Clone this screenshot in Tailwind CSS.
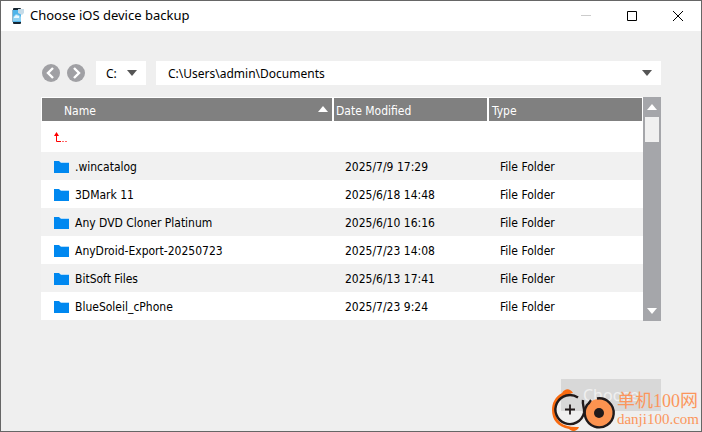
<!DOCTYPE html>
<html lang="en">
<head>
  <meta charset="UTF-8">
  <meta name="viewport" content="width=device-width, initial-scale=1.0">
  <title>Choose iOS device backup</title>
  <script src="https://cdn.jsdelivr.net/npm/@tailwindcss/browser@4"></script>
</head>
<body class="bg-[#efefef] font-['DejaVu_Sans_Condensed','DejaVu_Sans','Noto_Sans_CJK_SC',sans-serif] font-stretch-condensed text-black">
  <div class="relative flex min-h-screen flex-col border border-[#666]">
    <!-- Title bar -->
    <header class="flex h-[30px] items-center bg-white pl-2">
      <svg class="size-4" viewBox="0 0 16 16" aria-hidden="true">
        <rect x="4" y="0" width="8" height="16" rx="1" fill="#172632"/>
        <rect x="4" y="2" width="8" height="12" fill="#4fb4ea"/>
        <path d="M4 9l3-3 3 1 2 2v4H4z" fill="#8fd2f3"/>
        <path d="M5 9l2-2 3 1v2H5z" fill="#e8f7ff"/>
        <path d="M9 1h6v4l-2 2-4-2z" fill="#c6dce9"/>
        <path d="M3 2h1v12H3z" fill="#91b5cb"/>
      </svg>
      <h1 class="ml-[5px] pb-[2px] font-['Noto_Sans',sans-serif] text-[13px] leading-4">Choose iOS device backup</h1>
      <div class="ml-auto flex h-full">
        <button class="flex w-[46px] items-center justify-center" aria-label="Minimize" disabled>
          <svg class="size-[10px]" viewBox="0 0 10 10"><path d="M0 4.500h10" stroke="#ccc"/></svg>
        </button>
        <button class="flex w-[46px] items-center justify-center" aria-label="Maximize">
          <svg class="size-[10px]" viewBox="0 0 10 10"><path d="M.5.5h9v9h-9z" fill="none" stroke="#000"/></svg>
        </button>
        <button class="flex w-[46px] items-center justify-center" aria-label="Close">
          <svg class="size-[10px]" viewBox="0 0 10 10"><path d="M0 0l10 10M10 0L0 10" stroke="#000"/></svg>
        </button>
      </div>
    </header>

    <main class="flex grow flex-col px-10 pt-[30px] pb-5 text-xs">
      <!-- Navigation -->
      <div class="flex h-6 items-center">
        <button class="ml-px" aria-label="Back">
          <svg class="size-[18px]" viewBox="0 0 18 18"><circle cx="9" cy="9" r="9" fill="#a0a0a4"/><path d="M11 4L6 9l5 5" fill="none" stroke="#fff" stroke-width="2.400"/></svg>
        </button>
        <button class="ml-[7px]" aria-label="Forward">
          <svg class="size-[18px]" viewBox="0 0 18 18"><circle cx="9" cy="9" r="9" fill="#a0a0a4"/><path d="M7 4l5 5-5 5" fill="none" stroke="#fff" stroke-width="2.400"/></svg>
        </button>
        <div class="relative ml-[11px] h-6 w-[50px] bg-white">
          <select class="h-full w-full appearance-none pt-px pl-[10px] font-['Noto_Sans',sans-serif]" aria-label="Drive">
            <option>C:</option>
          </select>
          <svg class="pointer-events-none absolute top-[9px] right-[9px] h-[6px] w-[10px]" viewBox="0 0 10 6"><path d="M0 0h10L5 6z" fill="#555"/></svg>
        </div>
        <div class="relative ml-[10px] h-6 grow bg-white">
          <select class="h-full w-full appearance-none pt-px pl-3 font-['Noto_Sans',sans-serif]" aria-label="Folder">
            <option>C:\Users\admin\Documents</option>
          </select>
          <svg class="pointer-events-none absolute top-[9px] right-[9px] h-[6px] w-[10px]" viewBox="0 0 10 6"><path d="M0 0h10L5 6z" fill="#555"/></svg>
        </div>
      </div>

      <svg class="hidden">
        <symbol id="folder" viewBox="0 0 15 12">
          <path d="M5 1h10v2H5z" fill="#b5dcfa"/>
          <path d="M0 0h5l2 2h8v10H0z" fill="#0088f0"/>
        </symbol>
      </svg>

      <!-- File list -->
      <div class="mt-3 flex h-56">
        <div class="grow self-start bg-white">
          <table class="w-full table-fixed border-separate border-spacing-0 text-left">
            <colgroup>
              <col class="w-[291px]">
              <col class="w-[155px]">
              <col>
            </colgroup>
            <thead>
              <tr class="h-6 text-white">
                <th class="border-t border-l border-white bg-[#808080] p-0 pt-[2px] font-normal">
                  <div class="flex items-center justify-between pr-1 pl-[22px]">
                    Name
                    <svg class="mb-1 h-[6px] w-[10px]" viewBox="0 0 10 6"><path d="M5 0l5 6H0z" fill="#fff"/></svg>
                  </div>
                </th>
                <th class="border-t border-l-2 border-white bg-[#808080] p-0 pt-[2px] pl-[2px] font-normal">Date Modified</th>
                <th class="border-t border-r border-l-2 border-white bg-[#808080] p-0 pt-[2px] pl-[3px] font-normal">Type</th>
              </tr>
            </thead>
            <tbody>
              <tr class="h-[31px]">
                <td class="p-0 pt-[2px] pl-[13px]" colspan="3">
                  <button class="block" aria-label="Up one level">
                    <svg class="h-[11px] w-[14px]" viewBox="0 0 14 11"><path d="M2.500 0L5 4H0z" fill="red"/><path d="M2.500 3v6.500H7" fill="none" stroke="red"/><path d="M8 9.500h6" stroke="#f66" stroke-dasharray="2 1"/></svg>
                  </button>
                </td>
              </tr>
              <tr class="h-7 odd:bg-white even:bg-[#f1f1f1]">
                <td class="p-0 pt-[2px] pl-[13px]"><div class="flex items-center gap-[6px]"><svg class="h-3 w-[15px]"><use href="#folder"/></svg>.wincatalog</div></td>
                <td class="p-0 pt-[2px] pl-[13px]">2025/7/9 17:29</td>
                <td class="p-0 pt-[2px] pl-[13px]">File Folder</td>
              </tr>
              <tr class="h-7 odd:bg-white even:bg-[#f1f1f1]">
                <td class="p-0 pt-[2px] pl-[13px]"><div class="flex items-center gap-[6px]"><svg class="h-3 w-[15px]"><use href="#folder"/></svg>3DMark 11</div></td>
                <td class="p-0 pt-[2px] pl-[13px]">2025/6/18 14:48</td>
                <td class="p-0 pt-[2px] pl-[13px]">File Folder</td>
              </tr>
              <tr class="h-7 odd:bg-white even:bg-[#f1f1f1]">
                <td class="p-0 pt-[2px] pl-[13px]"><div class="flex items-center gap-[6px]"><svg class="h-3 w-[15px]"><use href="#folder"/></svg>Any DVD Cloner Platinum</div></td>
                <td class="p-0 pt-[2px] pl-[13px]">2025/6/10 16:16</td>
                <td class="p-0 pt-[2px] pl-[13px]">File Folder</td>
              </tr>
              <tr class="h-7 odd:bg-white even:bg-[#f1f1f1]">
                <td class="p-0 pt-[2px] pl-[13px]"><div class="flex items-center gap-[6px]"><svg class="h-3 w-[15px]"><use href="#folder"/></svg>AnyDroid-Export-20250723</div></td>
                <td class="p-0 pt-[2px] pl-[13px]">2025/7/23 14:08</td>
                <td class="p-0 pt-[2px] pl-[13px]">File Folder</td>
              </tr>
              <tr class="h-7 odd:bg-white even:bg-[#f1f1f1]">
                <td class="p-0 pt-[2px] pl-[13px]"><div class="flex items-center gap-[6px]"><svg class="h-3 w-[15px]"><use href="#folder"/></svg>BitSoft Files</div></td>
                <td class="p-0 pt-[2px] pl-[13px]">2025/6/13 17:41</td>
                <td class="p-0 pt-[2px] pl-[13px]">File Folder</td>
              </tr>
              <tr class="h-7 odd:bg-white even:bg-[#f1f1f1]">
                <td class="p-0 pt-[2px] pl-[13px]"><div class="flex items-center gap-[6px]"><svg class="h-3 w-[15px]"><use href="#folder"/></svg>BlueSoleil_cPhone</div></td>
                <td class="p-0 pt-[2px] pl-[13px]">2025/7/23 9:24</td>
                <td class="p-0 pt-[2px] pl-[13px]">File Folder</td>
              </tr>
            </tbody>
          </table>
        </div>
        <!-- Scrollbar -->
        <div class="flex w-[18px] shrink-0 flex-col items-center bg-[#a5a6aa]">
          <button class="flex h-5 items-center" aria-label="Scroll up">
            <svg class="h-[6px] w-[10px]" viewBox="0 0 10 6"><path d="M5 0l5 6H0z" fill="#fff"/></svg>
          </button>
          <div class="h-[25px] w-[14px] bg-[#f0f0f0]"></div>
          <button class="mt-auto flex h-5 items-center" aria-label="Scroll down">
            <svg class="h-[6px] w-[10px]" viewBox="0 0 10 6"><path d="M0 0h10L5 6z" fill="#fff"/></svg>
          </button>
        </div>
      </div>

      <button class="mt-auto h-8 w-[100px] self-end bg-[#d8d8d8] font-['Noto_Sans',sans-serif] text-base text-[#f0f0f0]" disabled>Choose</button>
    </main>

    <!-- Site mark -->
    <div class="absolute right-[2px] bottom-0 flex items-center gap-px text-[#fb965c]">
      <svg class="h-[42px] w-[64px]" viewBox="0 0 64 42" aria-hidden="true">
        <path d="M21 4C18-1 13-1 10 4 3 8 0 14 0 21c0 10 6 17 17 19 3 3 8 3 10-2C11 39 3 32 3 21 3 12 9 6 21 4z" fill="#f96a10"/>
        <path d="M26 8.500A14.500 14.500 0 1 0 32 24C33 19 30 17 31 11" fill="none" stroke="#211a1b" stroke-width="2.400"/>
        <path d="M18 15.500v10M13 20.500h10" stroke="#211a1b" stroke-width="1.800"/>
        <circle cx="47" cy="24" r="14" fill="#fc9350"/>
        <path d="M45 9.500A14.500 14.500 0 1 1 35 16C38 14 38 12 39 11" fill="none" stroke="#211a1b" stroke-width="2.400"/>
        <circle cx="47" cy="24" r="5" fill="#211a1b"/>
      </svg>
      <div class="font-['Liberation_Serif','Noto_Sans_CJK_SC',serif]">
        <p class="text-lg leading-[18px]">单机100网</p>
        <p class="text-[15px] leading-[18px]">danji100.com</p>
      </div>
    </div>
  </div>
</body>
</html>
